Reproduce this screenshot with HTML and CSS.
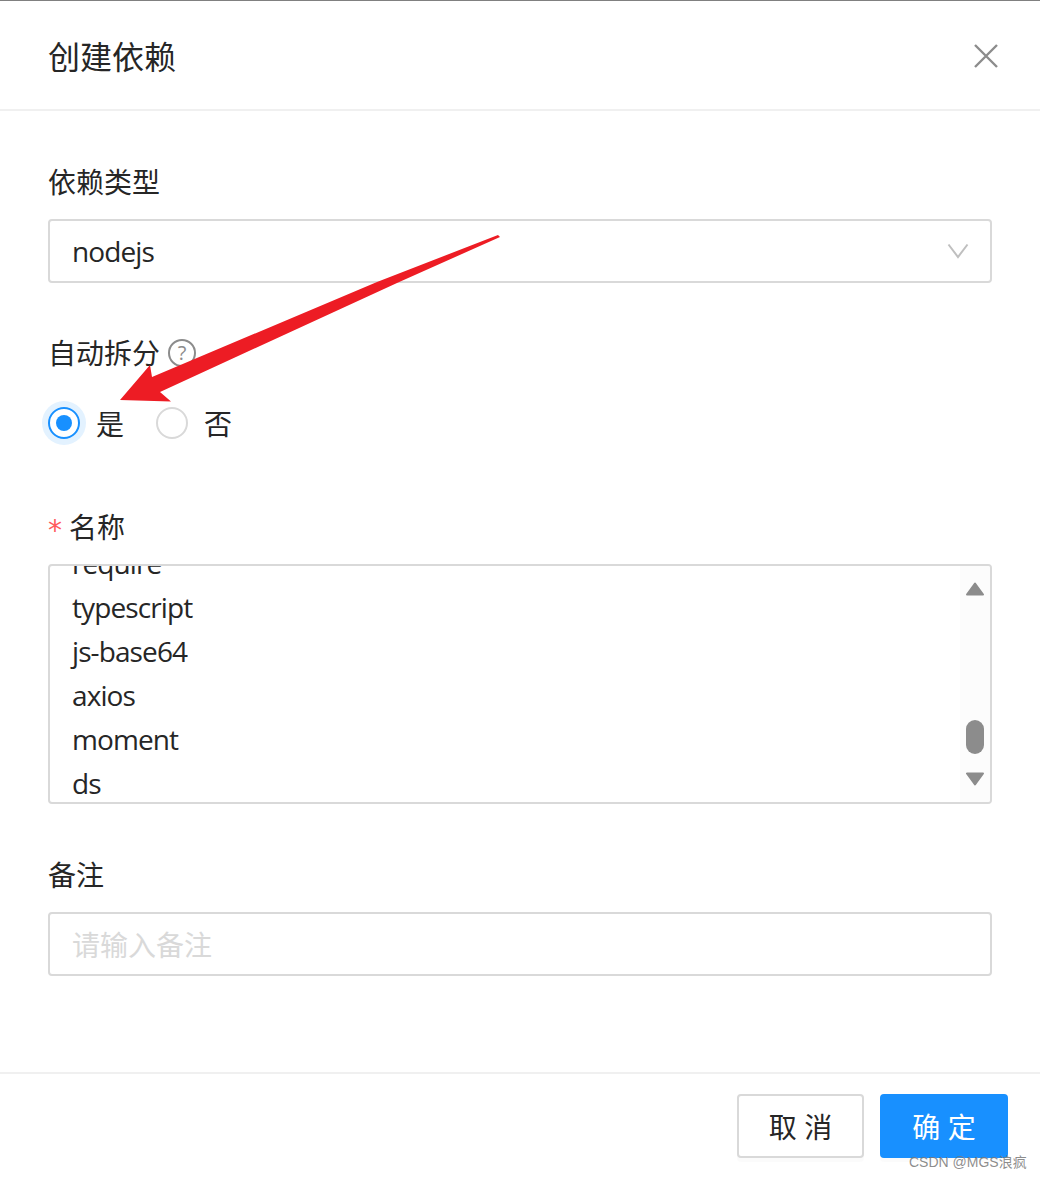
FILE: index.html
```html
<!DOCTYPE html>
<html lang="zh-CN">
<head>
    <meta charset="UTF-8">
    <title>创建依赖</title>
    <link rel="stylesheet" href="styles.css">
</head>
<body>
    <div class="dialog">
        <div class="header">
            <h1 class="title">创建依赖</h1>
            <svg class="close-icon" width="26" height="26" viewBox="0 0 26 26">
                <path d="M2 2L24 24M24 2L2 24" stroke="#8c8c8c" stroke-width="2.4" fill="none"/>
            </svg>
        </div>
        <div class="content">
            <div class="form-item">
                <div class="label">依赖类型</div>
                <div class="input select">
                    <span>nodejs</span>
                    <svg class="arrow-icon" width="22" height="16" viewBox="0 0 22 16">
                        <path d="M1.5 1.5L11 14L20.5 1.5" stroke="#bfbfbf" stroke-width="2" fill="none"/>
                    </svg>
                </div>
            </div>
            <div class="form-item">
                <div class="label">
                    自动拆分
                    <span class="help">?</span>
                </div>
                <div class="radio-group">
                    <label class="radio">
                        <span class="radio-ring checked"><span class="radio-dot"></span></span>
                        是
                    </label>
                    <label class="radio">
                        <span class="radio-ring"></span>
                        否
                    </label>
                </div>
            </div>
            <div class="form-item">
                <div class="label"><span class="required">*</span>名称</div>
                <div class="textarea">
                    <div class="lines">
                        <div>require</div>
                        <div>typescript</div>
                        <div>js-base64</div>
                        <div>axios</div>
                        <div>moment</div>
                        <div>ds</div>
                    </div>
                    <div class="scrollbar">
                        <svg class="scroll-up" width="18" height="14" viewBox="0 0 18 14">
                            <path d="M9 1.5L17 12.5H1Z" fill="#8c8c8c" stroke="#8c8c8c" stroke-width="2" stroke-linejoin="round"/>
                        </svg>
                        <span class="scroll-thumb"></span>
                        <svg class="scroll-down" width="18" height="14" viewBox="0 0 18 14">
                            <path d="M1 1.5H17L9 12.5Z" fill="#8c8c8c" stroke="#8c8c8c" stroke-width="2" stroke-linejoin="round"/>
                        </svg>
                    </div>
                </div>
            </div>
            <div class="form-item remark">
                <div class="label">备注</div>
                <div class="input placeholder">请输入备注</div>
            </div>
        </div>
        <div class="footer">
            <button class="btn">取 消</button>
            <button class="btn btn-primary">确 定</button>
        </div>
    </div>

    <!-- annotation drawn over the screenshot -->
    <svg class="red-arrow" width="1040" height="420" viewBox="0 0 1040 420">
        <path d="M498 235L500 237L397 283L160 392L171 401.5L120 400L150 365L152 377L377 282Z" fill="#ed1c24"/>
    </svg>
    <div class="watermark">CSDN @MGS浪疯</div>
</body>
</html>
```

FILE: styles.css
```css
body {
    margin: 0;
    padding: 0;
    background-color: #ffffff;
    color: #262626;
    font-family: "Open Sans", "Noto Sans CJK SC", sans-serif;
}
.dialog {
    display: flex;
    flex-direction: column;
    height: 1178px;
    box-sizing: border-box;
    border-top: 1px solid #808080;
    overflow: hidden;
}
.header {
    display: flex;
    align-items: center;
    justify-content: space-between;
    box-sizing: border-box;
    height: 110px;
    padding: 2px 41px 0 48px;
    border-bottom: 2px solid #f0f0f0;
}
.title {
    margin: 2px 0 0;
    font-size: 32px;
    font-weight: 400;
    line-height: 44px;
}
.close-icon {
    display: block;
}
.content {
    padding: 49px 48px 0;
}
.form-item {
    margin-bottom: 48px;
}
.remark {
    padding-top: 1px;
}
.label {
    display: flex;
    align-items: center;
    height: 44px;
    margin-bottom: 15px;
    font-size: 28px;
    line-height: 44px;
}
.required {
    margin-right: 7px;
    padding-top: 8px;
    color: #ff5a5c;
    font-family: "DejaVu Sans", sans-serif;
    font-size: 28px;
    line-height: 36px;
}
.help {
    display: inline-block;
    box-sizing: border-box;
    width: 28px;
    height: 28px;
    margin-left: 8px;
    border: 2px solid #8c8c8c;
    border-radius: 50%;
    color: #8c8c8c;
    font-size: 20px;
    line-height: 24px;
    text-align: center;
}
.input {
    box-sizing: border-box;
    height: 64px;
    padding: 0 22px;
    border: 2px solid #d9d9d9;
    border-radius: 4px;
    font-size: 28px;
    line-height: 60px;
}
.select {
    display: flex;
    align-items: center;
    justify-content: space-between;
    letter-spacing: -0.9px;
}
.arrow-icon {
    display: block;
    margin-right: -1px;
}
.placeholder {
    color: #d9d9d9;
    line-height: 62px;
}
.radio-group {
    display: flex;
    align-items: center;
    gap: 32px;
    height: 66px;
    padding-bottom: 1px;
}
.radio {
    display: flex;
    align-items: center;
    gap: 16px;
    font-size: 28px;
}
.radio-ring {
    display: flex;
    align-items: center;
    justify-content: center;
    box-sizing: border-box;
    width: 32px;
    height: 32px;
    border: 2px solid #d9d9d9;
    border-radius: 50%;
}
.radio-ring.checked {
    border-color: #1890ff;
    box-shadow: 0 0 0 6px #e3f2ff;
}
.radio-dot {
    width: 16px;
    height: 16px;
    border-radius: 50%;
    background-color: #1890ff;
}
.textarea {
    display: flex;
    justify-content: space-between;
    box-sizing: border-box;
    height: 240px;
    padding-left: 22px;
    border: 2px solid #d9d9d9;
    border-radius: 4px;
    overflow: hidden;
    font-size: 28px;
    line-height: 44px;
    letter-spacing: -0.9px;
}
.lines {
    margin-top: -25px;
}
.scrollbar {
    position: relative;
    width: 30px;
    background-color: #fcfcfc;
}
.scroll-up,
.scroll-down {
    position: absolute;
    left: 6px;
}
.scroll-up {
    top: 16px;
}
.scroll-down {
    bottom: 16px;
}
.scroll-thumb {
    position: absolute;
    top: 154px;
    left: 6px;
    width: 18px;
    height: 34px;
    border-radius: 9px;
    background-color: #8c8c8c;
}
.footer {
    display: flex;
    justify-content: flex-end;
    gap: 16px;
    margin-top: auto;
    padding: 20px 32px;
    border-top: 2px solid #f0f0f0;
}
.btn {
    box-sizing: border-box;
    width: 127px;
    height: 64px;
    border: 2px solid #d9d9d9;
    border-radius: 4px;
    background-color: #ffffff;
    box-shadow: 0 4px 0 rgba(0, 0, 0, 0.015);
    color: #262626;
    font-family: inherit;
    font-size: 28px;
}
.btn-primary {
    width: 128px;
    border-color: #1890ff;
    background-color: #1890ff;
    color: #ffffff;
}
.red-arrow {
    position: absolute;
    top: 0;
    left: 0;
}
.watermark {
    position: absolute;
    top: 1152px;
    left: 909px;
    color: rgba(120, 120, 120, 0.85);
    font-family: "Liberation Sans", "Noto Sans CJK SC", sans-serif;
    font-size: 14px;
    line-height: 20px;
}
```
